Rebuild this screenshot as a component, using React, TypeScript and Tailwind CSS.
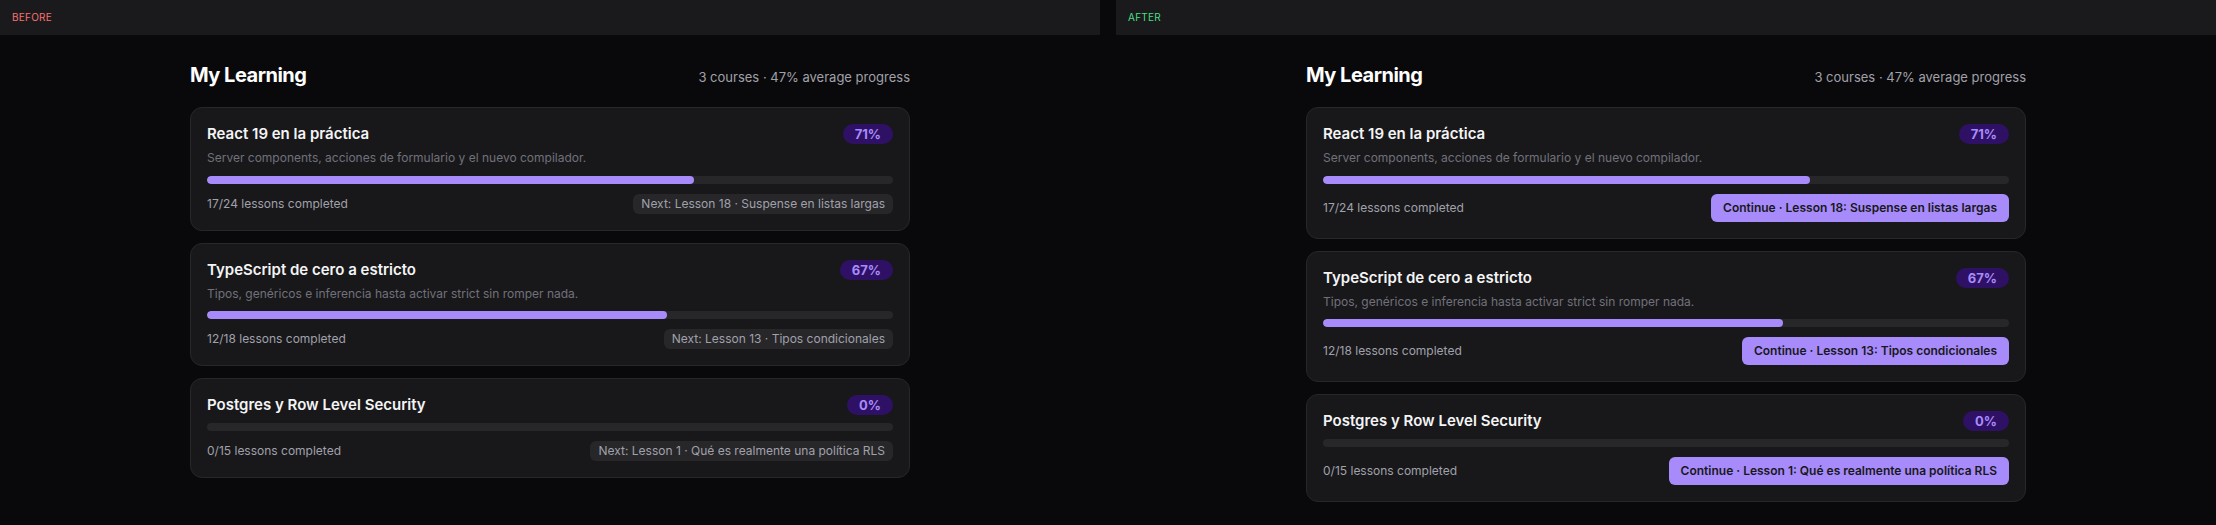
import React from "react";

type Course = {
  title: string;
  description?: string;
  done: number;
  total: number;
  nextLesson: number;
  nextTitle: string;
};

const courses: Course[] = [
  {
    title: "React 19 en la práctica",
    description: "Server components, acciones de formulario y el nuevo compilador.",
    done: 17,
    total: 24,
    nextLesson: 18,
    nextTitle: "Suspense en listas largas",
  },
  {
    title: "TypeScript de cero a estricto",
    description: "Tipos, genéricos e inferencia hasta activar strict sin romper nada.",
    done: 12,
    total: 18,
    nextLesson: 13,
    nextTitle: "Tipos condicionales",
  },
  {
    title: "Postgres y Row Level Security",
    done: 0,
    total: 15,
    nextLesson: 1,
    nextTitle: "Qué es realmente una política RLS",
  },
];

export default function App() {
  return (
    <div
      className="flex min-h-screen w-full gap-4 bg-[#09090b] text-[#f4f4f5]"
      style={{ fontFamily: "Inter, 'Noto Sans', sans-serif" }}
    >
      <Panel label="Before" after={false} />
      <Panel label="After" after />
    </div>
  );
}

function Panel({ label, after }: { label: string; after: boolean }) {
  return (
    <div className="flex-1 min-w-0">
      <div className="flex h-[35px] items-center bg-[#1a1a1d] px-3">
        <span
          className={`text-[10px] uppercase tracking-wide ${
            after ? "text-[#4ade80]" : "text-[#f87171]"
          }`}
        >
          {label}
        </span>
      </div>

      <div className="mx-auto w-[720px] pt-[26px]">
        <div className="mb-[18px] flex h-7 items-baseline justify-between">
          <h1 className="text-[20px] leading-7 font-bold tracking-tight text-white">My Learning</h1>
          <span className="text-[13px] text-[#a1a1aa]">3 courses · 47% average progress</span>
        </div>

        <div className="flex flex-col gap-3">
          {courses.map((c) => (
            <CourseCard key={c.title} course={c} after={after} />
          ))}
        </div>
      </div>
    </div>
  );
}

function CourseCard({ course, after }: { course: Course; after: boolean }) {
  const pct = Math.round((course.done / course.total) * 100);

  return (
    <div className="rounded-xl border border-[#27272a] bg-[#18181b] p-4">
      <div className="flex h-5 items-center justify-between">
        <h2 className="text-[15px] leading-5 font-semibold text-[#f4f4f5]">{course.title}</h2>
        <span className="rounded-full bg-[#2e1065] px-3 text-[13px] leading-5 font-bold text-[#a78bfa]">
          {pct}%
        </span>
      </div>

      {course.description && (
        <p className="mt-1 text-[12px] leading-[19.5px] text-[#71717a]">{course.description}</p>
      )}

      <div className="mt-2 h-2 w-full overflow-hidden rounded-full bg-[#27272a]">
        <div className="h-full rounded-full bg-[#a78bfa]" style={{ width: `${pct}%` }} />
      </div>

      <div className="mt-2.5 flex items-center justify-between">
        <span className="text-[12px] text-[#a1a1aa]">
          {course.done}/{course.total} lessons completed
        </span>
        {after ? (
          <button className="rounded-md bg-[#a78bfa] px-3 py-1.5 text-[12px] leading-4 font-semibold text-[#18181b]">
            Continue · Lesson {course.nextLesson}: {course.nextTitle}
          </button>
        ) : (
          <span className="rounded-md bg-[#27272a] px-2 py-0.5 text-[12px] leading-4 text-[#a1a1aa]">
            Next: Lesson {course.nextLesson} · {course.nextTitle}
          </span>
        )}
      </div>
    </div>
  );
}
